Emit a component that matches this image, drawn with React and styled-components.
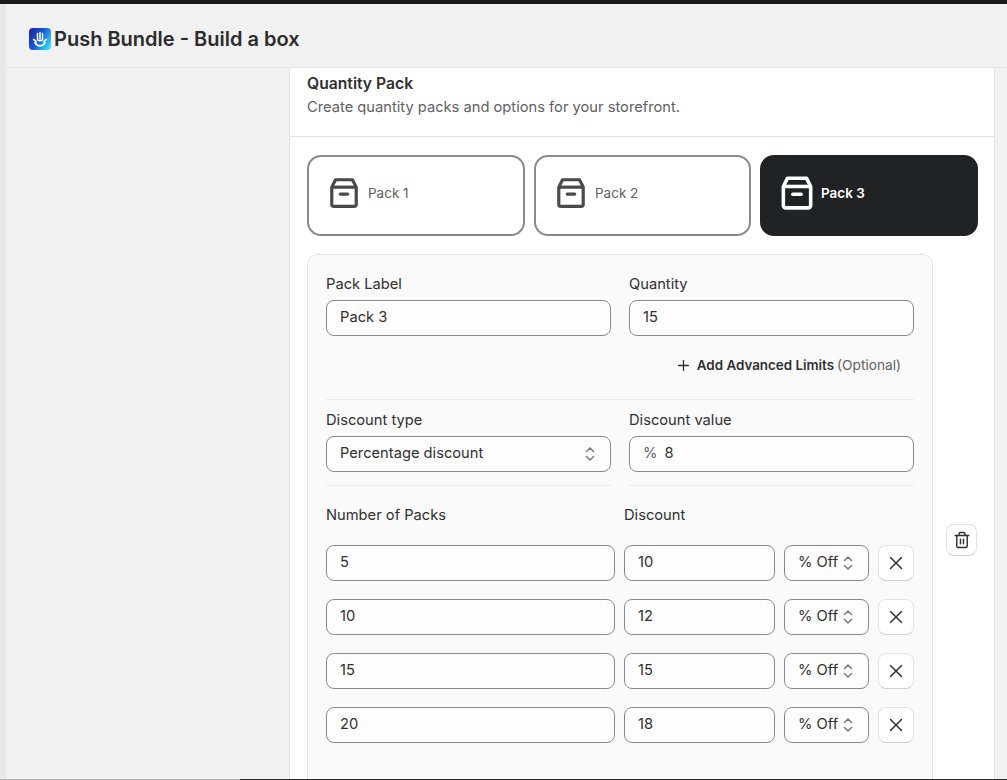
import React from "react";
import styled, { createGlobalStyle } from "styled-components";
import { Plus, Trash2, X } from "lucide-react";

const GlobalStyle = createGlobalStyle`
  html, body {
    margin: 0;
    padding: 0;
    background: #f1f1f1;
  }
  * {
    box-sizing: border-box;
  }
`;

const tiers = [
  { packs: "5", discount: "10" },
  { packs: "10", discount: "12" },
  { packs: "15", discount: "15" },
  { packs: "20", discount: "18" },
];

const packs = [
  { label: "Pack 1", active: false },
  { label: "Pack 2", active: false },
  { label: "Pack 3", active: true },
];

function Logo() {
  return (
    <LogoMark viewBox="0 0 22 22" aria-hidden="true">
      <defs>
        <linearGradient id="logoFill" x1="0" y1="0.2" x2="1" y2="0.8">
          <stop offset="0" stopColor="#1a2a9c" />
          <stop offset="0.45" stopColor="#1c56d8" />
          <stop offset="1" stopColor="#2fe6fb" />
        </linearGradient>
      </defs>
      <rect width="22" height="22" rx="4" fill="url(#logoFill)" />
      <path
        d="M4.500 11.500c1.200.3 2.300 1.200 3 2.200M17.500 11.500c-1.200.3-2.300 1.200-3 2.200M5.800 14.500c1.300 2.200 3.100 3.400 5.200 3.400s3.900-1.200 5.200-3.400"
        fill="none"
        stroke="#fff"
        strokeWidth="1.500"
        strokeLinecap="round"
      />
      <path
        d="M8.500 5.500v5.500M11 4.500v6.500M13.500 5.500v5.500M8.500 11.500c.6 1.700 4.400 1.700 5 0"
        fill="none"
        stroke="#fff"
        strokeWidth="1.500"
        strokeLinecap="round"
      />
    </LogoMark>
  );
}

function BoxIcon({ active }) {
  return (
    <BoxSvg $active={active} viewBox="0 0 32 32" aria-hidden="true">
      <path
        d="M4.500 10.500 8 3.500h16l3.500 7v16a2 2 0 0 1-2 2h-19a2 2 0 0 1-2-2z"
        fill="none"
        stroke="currentColor"
        strokeWidth="3"
        strokeLinejoin="round"
      />
      <path d="M5 10.500h22" stroke="currentColor" strokeWidth="3" />
      <path d="M12.500 17h7" stroke="currentColor" strokeWidth="3" strokeLinecap="round" />
    </BoxSvg>
  );
}

function Stepper() {
  return (
    <StepperSvg viewBox="0 0 12 18" aria-hidden="true">
      <path d="M2.500 6.500 6 3l3.500 3.500M2.500 11.500 6 15l3.500-3.500" />
    </StepperSvg>
  );
}

export default function App() {
  return (
    <Page>
      <GlobalStyle />
      <TopBar />
      <Shell>
        <Gutter />
        <Main>
          <Header>
            <Logo />
            <Title>Push Bundle - Build a box</Title>
          </Header>
          <Content>
            <Card>
              <CardHead>
                <CardTitle>Quantity Pack</CardTitle>
                <CardSub>Create quantity packs and options for your storefront.</CardSub>
              </CardHead>
              <CardBody>
                <PackRow>
                  {packs.map((pack) => (
                    <PackButton key={pack.label} $active={pack.active}>
                      <BoxIcon active={pack.active} />
                      {pack.label}
                    </PackButton>
                  ))}
                </PackRow>
                <EditorRow>
                  <Panel>
                    <TwoCols>
                      <Field>
                        <Label>Pack Label</Label>
                        <TextBox defaultValue="Pack 3" />
                      </Field>
                      <Field>
                        <Label>Quantity</Label>
                        <TextBox defaultValue="15" />
                      </Field>
                    </TwoCols>
                    <AdvancedRow>
                      <Plus size={17} strokeWidth={1.8} color="#303030" />
                      <AdvancedLink>Add Advanced Limits</AdvancedLink>
                      <Optional>(Optional)</Optional>
                    </AdvancedRow>
                    <Rule />
                    <TwoCols>
                      <Field>
                        <Label>Discount type</Label>
                        <SelectBox>
                          <BoxText>Percentage discount</BoxText>
                          <Stepper />
                        </SelectBox>
                        <Rule $tight />
                      </Field>
                      <Field>
                        <Label>Discount value</Label>
                        <AffixBox>
                          <BoxText>
                            <Prefix>%</Prefix>8
                          </BoxText>
                        </AffixBox>
                        <Rule $tight />
                      </Field>
                    </TwoCols>
                    <TierLabels>
                      <Label>Number of Packs</Label>
                      <Label>Discount</Label>
                    </TierLabels>
                    <TierList>
                      {tiers.map((tier) => (
                        <TierRow key={tier.packs}>
                          <TextBox defaultValue={tier.packs} />
                          <TextBox defaultValue={tier.discount} />
                          <UnitSelect>
                            <BoxText>% Off</BoxText>
                            <Stepper />
                          </UnitSelect>
                          <IconButton aria-label="Remove tier">
                            <X size={22} strokeWidth={1.6} color="#303030" />
                          </IconButton>
                        </TierRow>
                      ))}
                    </TierList>
                  </Panel>
                  <DeleteButton aria-label="Delete pack">
                    <Trash2 size={18} strokeWidth={1.9} color="#303030" />
                  </DeleteButton>
                </EditorRow>
              </CardBody>
            </Card>
          </Content>
        </Main>
      </Shell>
      <BottomEdge>
        <EdgeLight />
        <EdgeDark />
      </BottomEdge>
    </Page>
  );
}

const Page = styled.div`
  height: 780px;
  display: flex;
  flex-direction: column;
  overflow: hidden;
  font-family: Inter, "Liberation Sans", sans-serif;
  font-size: 14.7px;
  color: #303030;
`;
const TopBar = styled.div`
  height: 4px;
  flex: none;
  background: #1a1a1a;
`;
const Shell = styled.div`
  flex: 1;
  min-height: 0;
  display: flex;
`;
const Gutter = styled.div`
  width: 6px;
  flex: none;
  background: #e9e9e9;
`;
const Main = styled.div`
  flex: 1;
  min-width: 0;
  display: flex;
  flex-direction: column;
`;
const Header = styled.header`
  height: 64px;
  flex: none;
  display: flex;
  align-items: center;
  gap: 3px;
  padding: 6px 0 0 23px;
  border-bottom: 1px solid #e6e6e6;
`;
const LogoMark = styled.svg`
  width: 22px;
  height: 22px;
  flex: none;
`;
const Title = styled.h1`
  margin: 0;
  font-size: 20px;
  line-height: 28px;
  font-weight: 600;
  color: #2c2c2c;
`;
const Content = styled.main`
  flex: 1;
  min-height: 0;
  padding: 0 12px 0 283px;
`;
const Card = styled.section`
  height: 100%;
  background: #fff;
  border-left: 1px solid #e3e3e3;
  border-right: 1px solid #e3e3e3;
  overflow: hidden;
`;
const CardHead = styled.div`
  height: 69px;
  padding: 6px 17px 0;
  border-bottom: 1px solid #e3e3e3;
`;
const CardTitle = styled.h2`
  margin: 0;
  font-size: 15.7px;
  line-height: 20px;
  font-weight: 600;
`;
const CardSub = styled.p`
  margin: 3px 0 0;
  font-size: 14.7px;
  line-height: 20px;
  color: #616161;
`;
const CardBody = styled.div`
  padding: 18px 17px 0;
`;
const PackRow = styled.div`
  display: grid;
  grid-template-columns: 218px 217px 218px;
  gap: 9px;
`;
const PackButton = styled.div`
  height: 81px;
  display: flex;
  align-items: center;
  gap: ${(p) => (p.$active ? "5px" : "7px")};
  padding: 0 0 6px ${(p) => (p.$active ? "16px" : "18px")};
  border-radius: 14px;
  border: 2px solid ${(p) => (p.$active ? "#212224" : "#8a8a8a")};
  background: ${(p) => (p.$active ? "#212224" : "#fff")};
  color: ${(p) => (p.$active ? "#fff" : "#616161")};
  font-size: 13.5px;
  font-weight: ${(p) => (p.$active ? 600 : 400)};
`;
const BoxSvg = styled.svg`
  width: ${(p) => (p.$active ? "38px" : "34px")};
  height: ${(p) => (p.$active ? "38px" : "34px")};
  flex: none;
  color: ${(p) => (p.$active ? "#fff" : "#4a4a4a")};
`;
const EditorRow = styled.div`
  display: flex;
  align-items: flex-start;
  gap: 13px;
  margin-top: 18px;
`;
const Panel = styled.div`
  width: 626px;
  flex: none;
  height: 560px;
  padding: 19px 18px 0;
  border: 1px solid #e3e3e3;
  border-radius: 10px;
  background: #fafafa;
`;
const TwoCols = styled.div`
  display: grid;
  grid-template-columns: 285px 285px;
  gap: 18px;
`;
const Field = styled.div`
  display: flex;
  flex-direction: column;
`;
const Label = styled.div`
  font-size: 14.7px;
  line-height: 20px;
  color: #303030;
`;
const boxStyles = `
  height: 36px;
  width: 100%;
  border: 1px solid #8a8a8a;
  border-radius: 8px;
  background: #fdfdfd;
  font-family: inherit;
  font-size: 14.7px;
  color: #303030;
`;
const TextBox = styled.input`
  ${boxStyles}
  padding: 0 13px 2px;
  outline: none;
  ${Field} & {
    margin-top: 6px;
  }
`;
const BoxText = styled.span`
  margin-top: -2px;
`;
const SelectBox = styled.div`
  ${boxStyles}
  margin-top: 6px;
  display: flex;
  align-items: center;
  justify-content: space-between;
  padding: 0 14px 0 13px;
`;
const AffixBox = styled.div`
  ${boxStyles}
  margin-top: 6px;
  display: flex;
  align-items: center;
  padding: 0 13px;
`;
const Prefix = styled.span`
  color: #616161;
  margin-right: 7px;
`;
const StepperSvg = styled.svg`
  width: 12px;
  height: 18px;
  flex: none;
  fill: none;
  stroke: #7a7a7a;
  stroke-width: 1.5;
  stroke-linecap: round;
  stroke-linejoin: round;
`;
const AdvancedRow = styled.div`
  display: flex;
  align-items: center;
  justify-content: flex-end;
  height: 20px;
  margin-top: 19px;
  padding-right: 13px;
`;
const AdvancedLink = styled.span`
  margin-left: 5px;
  font-size: 13.4px;
  font-weight: 600;
  color: #303030;
`;
const Optional = styled.span`
  margin-left: 3px;
  font-size: 13.7px;
  color: #616161;
`;
const Rule = styled.hr`
  width: 100%;
  margin: ${(p) => (p.$tight ? "13px 0 0" : "24px 0 10px")};
  border: 0;
  border-top: 1px solid #ebebeb;
`;
const TierLabels = styled.div`
  display: grid;
  grid-template-columns: 298px 1fr;
  margin-top: 19px;
`;
const TierList = styled.div`
  display: flex;
  flex-direction: column;
  gap: 18px;
  margin-top: 20px;
`;
const TierRow = styled.div`
  display: grid;
  grid-template-columns: 289px 151px 85px 36px;
  gap: 9px;
`;
const UnitSelect = styled.div`
  ${boxStyles}
  display: flex;
  align-items: center;
  justify-content: space-between;
  padding: 0 14px 0 13px;
`;
const IconButton = styled.div`
  width: 36px;
  height: 36px;
  display: flex;
  align-items: center;
  justify-content: center;
  background: #fff;
  border: 1px solid #e3e3e3;
  border-bottom-color: #cfcfcf;
  border-radius: 8px;
`;
const DeleteButton = styled(IconButton)`
  width: 32px;
  height: 32px;
  margin-top: 270px;
`;
const BottomEdge = styled.div`
  height: 1px;
  flex: none;
  display: flex;
`;
const EdgeLight = styled.div`
  width: 240px;
  background: #b5b5b5;
`;
const EdgeDark = styled.div`
  flex: 1;
  background: #2a2a2a;
`;
